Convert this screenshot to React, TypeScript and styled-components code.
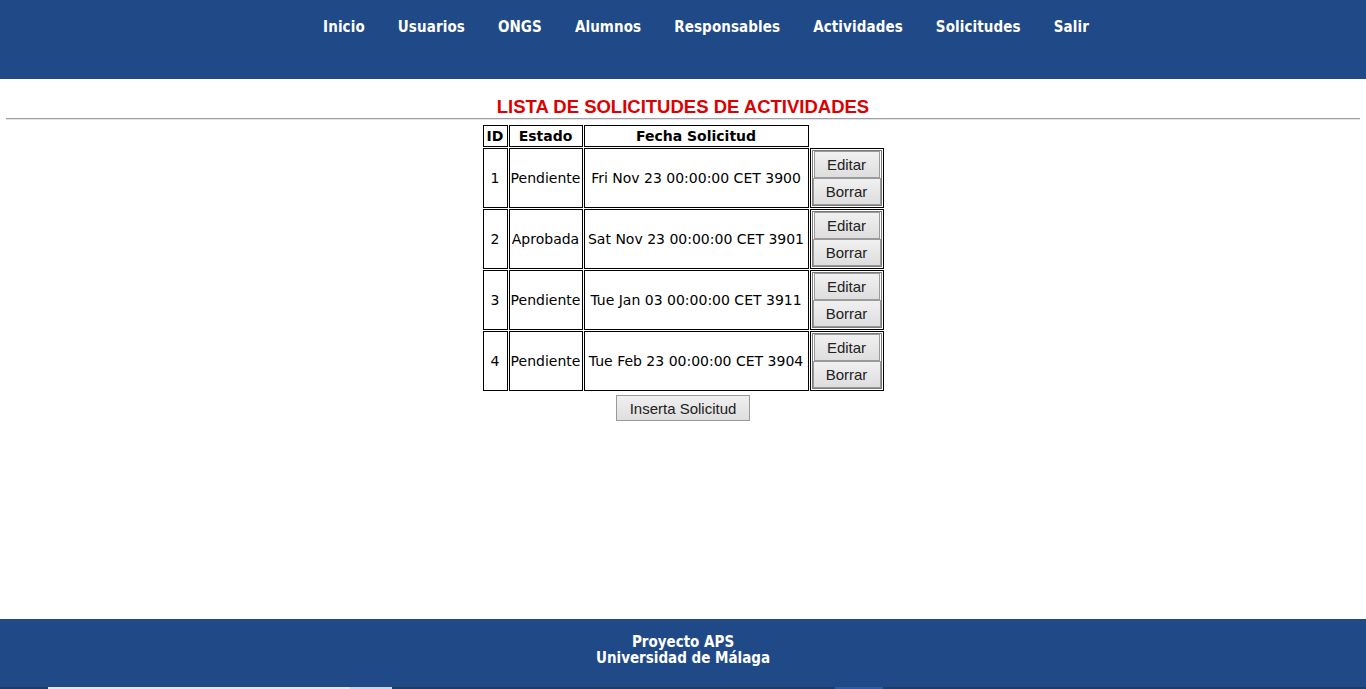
import React from "react";
import styled, { createGlobalStyle } from "styled-components";

const Global = createGlobalStyle`
  html, body { margin: 0; padding: 0; background: #fff; }
  body { font-family: "DejaVu Sans", Verdana, sans-serif; }
`;

const Page = styled.div`
  min-height: 100vh;
  display: flex;
  flex-direction: column;
`;

const Header = styled.header`
  height: 79px;
  background: #1f4a87;
  box-sizing: border-box;
  padding: 18px 0 0 46px;
`;

const Nav = styled.ul`
  margin: 0;
  padding: 0;
  list-style: none;
  display: flex;
  justify-content: center;
  gap: 33px;
`;

const NavItem = styled.li`
  font-family: "DejaVu Sans Condensed", Tahoma, sans-serif;
  font-weight: bold;
  font-size: 15px;
  letter-spacing: 0.1px;
  line-height: 18px;
  color: #fff;
`;

const Main = styled.main`
  flex: 1;
  display: flex;
  flex-direction: column;
  align-items: center;
  padding-top: 17px;
`;

const Title = styled.h2`
  margin: 0;
  font-family: "Liberation Sans", Arial, sans-serif;
  font-weight: bold;
  font-size: 18.5px;
  line-height: 22px;
  color: #dd0000;
`;

const Rule = styled.hr`
  align-self: stretch;
  margin: 0 6px 4px;
  border: 0;
  border-top: 1px solid #a0a0a0;
  border-bottom: 1px solid #e4e4e4;
  height: 0;
`;

const Table = styled.table`
  border-collapse: separate;
  border-spacing: 1px;
  font-family: "DejaVu Sans", Verdana, sans-serif;
  font-size: 14px;
  color: #000;
`;

const Th = styled.th<{ $w?: number }>`
  border: 1px solid #000;
  padding: 1px;
  font-weight: bold;
  line-height: 18px;
  box-sizing: border-box;
  ${(p) => (p.$w ? `width: ${p.$w}px;` : "")}
`;

const Td = styled.td`
  border: 1px solid #000;
  padding: 1px;
  text-align: center;
  white-space: nowrap;
`;

const ActionCell = styled.td`
  border: 1px solid #000;
  padding: 1px;
`;

const ActionBox = styled.div`
  border: 1px solid #7a7a7a;
  display: flex;
  flex-direction: column;
  align-items: center;
`;

const Button = styled.button<{ $w: number }>`
  width: ${(p) => p.$w}px;
  height: 27px;
  margin: 0;
  padding: 0;
  box-sizing: border-box;
  border: 1px solid #9a9a9a;
  border-radius: 0;
  background: linear-gradient(#f0f0f0, #dedede);
  font-family: "Liberation Sans", Arial, sans-serif;
  font-size: 15px;
  color: #222;
`;

const InsertButton = styled(Button)`
  height: 26px;
  margin-top: 3px;
`;

const Footer = styled.footer`
  height: 70px;
  background: #1f4a87;
  display: flex;
  flex-direction: column;
  align-items: center;
  box-sizing: border-box;
  padding-top: 15px;
  position: relative;
`;

const FooterLine = styled.div`
  font-family: "DejaVu Sans Condensed", Tahoma, sans-serif;
  font-weight: bold;
  font-size: 15px;
  line-height: 16px;
  color: #fff;
`;

const Strip = styled.div`
  position: absolute;
  left: 0;
  right: 0;
  bottom: 0;
  height: 2px;
  background: #1a3f62;
`;

const StripSeg = styled.div<{ $l: number; $w: number; $c: string }>`
  position: absolute;
  top: 0;
  bottom: 0;
  left: ${(p) => p.$l}px;
  width: ${(p) => p.$w}px;
  background: ${(p) => p.$c};
`;

const navItems = ["Inicio", "Usuarios", "ONGS", "Alumnos", "Responsables", "Actividades", "Solicitudes", "Salir"];

const rows = [
  { id: 1, estado: "Pendiente", fecha: "Fri Nov 23 00:00:00 CET 3900" },
  { id: 2, estado: "Aprobada", fecha: "Sat Nov 23 00:00:00 CET 3901" },
  { id: 3, estado: "Pendiente", fecha: "Tue Jan 03 00:00:00 CET 3911" },
  { id: 4, estado: "Pendiente", fecha: "Tue Feb 23 00:00:00 CET 3904" },
];

export default function App() {
  return (
    <Page>
      <Global />
      <Header>
        <Nav>
          {navItems.map((n) => (
            <NavItem key={n}>{n}</NavItem>
          ))}
        </Nav>
      </Header>
      <Main>
        <Title>LISTA DE SOLICITUDES DE ACTIVIDADES</Title>
        <Rule />
        <Table>
          <thead>
            <tr>
              <Th $w={25}>ID</Th>
              <Th $w={74}>Estado</Th>
              <Th $w={225}>Fecha Solicitud</Th>
            </tr>
          </thead>
          <tbody>
            {rows.map((r) => (
              <tr key={r.id}>
                <Td>{r.id}</Td>
                <Td>{r.estado}</Td>
                <Td>{r.fecha}</Td>
                <ActionCell>
                  <ActionBox>
                    <Button $w={66}>Editar</Button>
                    <Button $w={68}>Borrar</Button>
                  </ActionBox>
                </ActionCell>
              </tr>
            ))}
          </tbody>
        </Table>
        <InsertButton $w={134}>Inserta Solicitud</InsertButton>
      </Main>
      <Footer>
        <FooterLine>Proyecto APS</FooterLine>
        <FooterLine>Universidad de Málaga</FooterLine>
        <Strip>
          <StripSeg $l={48} $w={302} $c="#e3e8f0" />
          <StripSeg $l={350} $w={42} $c="#c9d6ea" />
          <StripSeg $l={835} $w={48} $c="#2c5f9c" />
        </Strip>
      </Footer>
    </Page>
  );
}
